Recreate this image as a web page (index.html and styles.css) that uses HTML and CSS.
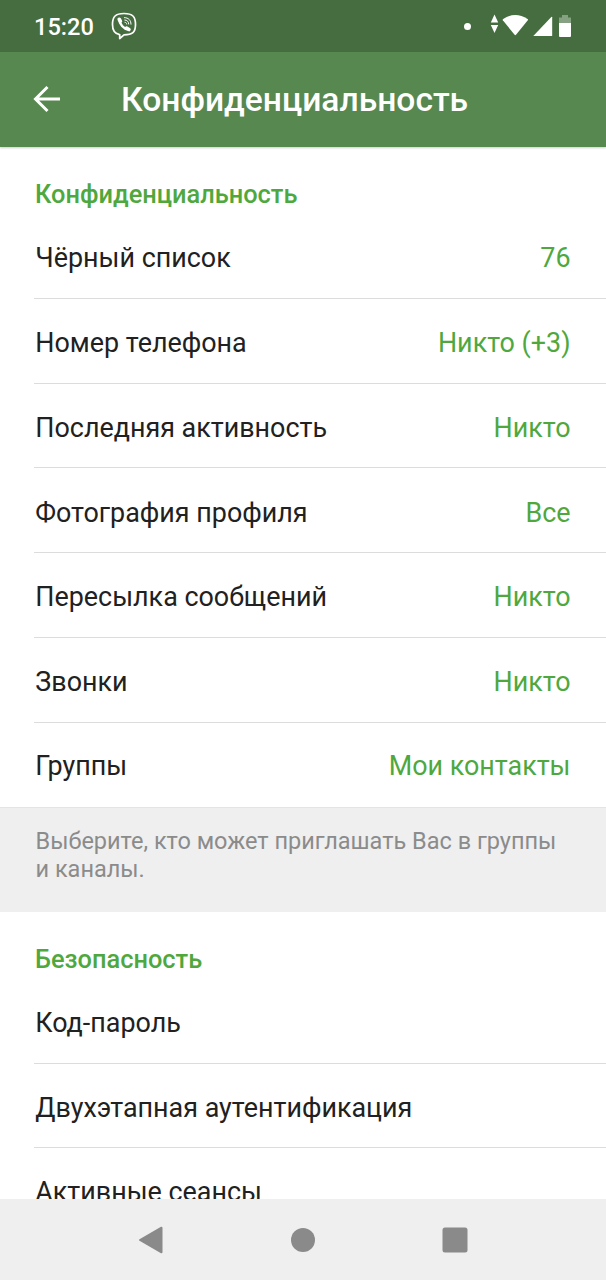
FILE: index.html
```html
<!DOCTYPE html>
<html lang="ru">
  <head>
    <meta charset="utf-8" />
    <title>Конфиденциальность</title>
    <link rel="stylesheet" href="styles.css">
  </head>
  <body>
    <div class="status-bar">
      <span class="time">15:20</span>
      <svg class="viber" width="26" height="28" viewBox="0 0 26 28" fill="none" stroke="#fff" stroke-linecap="round">
        <path d="M8 22.400C3.400 21.400 1.500 18.500 1.500 12.500C1.500 4.500 4.500 1.500 13 1.500S24.500 4.500 24.500 12.500S21.500 22.800 13 22.800L8.700 26.500V22.500" stroke-width="1.700" stroke-linejoin="round" />
        <path d="M8.400 7.200C8 11.800 13 17.300 17.300 17.600" stroke-width="2.400" />
        <path d="M8.200 7.300L9.400 9.300M15.600 16.200L18 17.500" stroke-width="3.600" />
        <path d="M13.500 5.600C17.600 5.800 20 8.300 20 12.200M13.800 8C16.300 8.200 17.600 9.600 17.700 12M14 10.300C15.100 10.400 15.600 10.900 15.700 12" stroke-width="1" />
      </svg>
      <span class="dot"></span>
      <svg class="signals" width="82" height="24" viewBox="0 0 82 24" fill="#fff">
        <path d="M4.500 0.500L8.200 8.500H0.800zM4.500 19L8.200 11H0.800z" />
        <path d="M12.800 6.200Q12.500 5.500 13.200 5Q25.300 -3 37.600 5Q38.300 5.500 37.800 6.200L26 20.800Q25.300 21.500 24.600 20.800z" />
        <path d="M43.300 22L61.300 3Q62.200 2.300 62.200 3.200V21.500Q62.200 22 61.700 22z" />
        <path class="battery-empty" d="M69 9V3.500H72V1H78V3.500H81V9z" />
        <path d="M69 9H81V22Q81 23 80 23H70Q69 23 69 22z" />
      </svg>
    </div>
    <header class="toolbar">
      <svg class="back" width="28" height="28" viewBox="0 0 28 28" fill="none" stroke="#fff" stroke-width="3">
        <path d="M27 14H3M14.500 2L2.500 14L14.500 26" />
      </svg>
      <h1>Конфиденциальность</h1>
    </header>
    <main class="content">
      <section class="section">
        <h2>Конфиденциальность</h2>
        <div class="row"><span>Чёрный список</span><span class="value">76</span></div>
        <div class="row"><span>Номер телефона</span><span class="value">Никто (+3)</span></div>
        <div class="row"><span>Последняя активность</span><span class="value">Никто</span></div>
        <div class="row"><span>Фотография профиля</span><span class="value">Все</span></div>
        <div class="row"><span>Пересылка сообщений</span><span class="value">Никто</span></div>
        <div class="row"><span>Звонки</span><span class="value">Никто</span></div>
        <div class="row last"><span>Группы</span><span class="value">Мои контакты</span></div>
      </section>
      <p class="info">Выберите, кто может приглашать Вас в группы и каналы.</p>
      <section class="section">
        <h2>Безопасность</h2>
        <div class="row"><span>Код-пароль</span></div>
        <div class="row"><span>Двухэтапная аутентификация</span></div>
        <div class="row last"><span>Активные сеансы</span></div>
      </section>
    </main>
    <nav class="nav-bar">
      <svg width="26" height="28" viewBox="0 0 26 28">
        <path d="M2 14L23.500 1.700V26.300z" stroke-width="2" stroke-linejoin="round" />
      </svg>
      <svg width="26" height="28" viewBox="0 0 26 28">
        <circle cx="13" cy="14" r="12" stroke="none" />
      </svg>
      <svg width="26" height="28" viewBox="0 0 26 28">
        <rect x="0.500" y="1.500" width="25" height="25" rx="2.500" stroke="none" />
      </svg>
    </nav>
  </body>
</html>
```
FILE: styles.css
```css
* {
  box-sizing: border-box;
}

body {
  margin: 0;
  height: 1280px;
  display: flex;
  flex-direction: column;
  overflow: hidden;
  background: #fff;
  color: #212121;
  font-family: Roboto, sans-serif;
}

.status-bar {
  flex: none;
  height: 52px;
  padding: 0 34px;
  display: flex;
  align-items: center;
  background: #466d40;
  color: #fff;
}
.time {
  width: 77px;
  padding-top: 2px;
  font-size: 23.6px;
  font-weight: 500;
}
.dot {
  width: 7px;
  height: 7px;
  margin-left: auto;
  margin-right: 19px;
  border-radius: 50%;
  background: #fff;
}
.signals {
  overflow: visible;
}
.battery-empty {
  opacity: 0.35;
}

.toolbar {
  flex: none;
  height: 95px;
  padding: 0 0 1px 33px;
  display: flex;
  align-items: center;
  background: #578850;
  color: #fff;
  box-shadow: 0 1px 2px rgba(0, 0, 0, 0.2);
}
.toolbar h1 {
  margin: 0 0 0 60px;
  font-size: 33.6px;
  font-weight: 500;
}

.content {
  flex: 1;
  min-height: 0;
  overflow: hidden;
}
.section h2 {
  margin: 0;
  height: 67.3px;
  padding: 33px 35px 0;
  font-size: 25.4px;
  line-height: 29px;
  font-weight: 500;
  color: #4fa83d;
}
.row {
  height: 84.73px;
  margin-left: 34px;
  padding: 4.4px 35.5px 0 1.3px;
  display: flex;
  justify-content: space-between;
  align-items: center;
  border-bottom: 1px solid #dcdcdc;
  font-size: 26.9px;
}
.row.last {
  padding-top: 2px;
  border-bottom: none;
}
.value {
  color: #4fa83d;
}
.info {
  margin: 0;
  height: 104.3px;
  padding: 20px 35.5px 0;
  background: #efefef;
  border-top: 1px solid #e4e4e4;
  color: #8b8b8b;
  font-size: 23.5px;
  line-height: 27.6px;
}

.nav-bar {
  flex: none;
  height: 81px;
  padding: 0 138.5px 0 137.5px;
  display: flex;
  justify-content: space-between;
  align-items: center;
  background: #efefef;
}
.nav-bar svg {
  fill: #8a8a8a;
  stroke: #8a8a8a;
}
```
